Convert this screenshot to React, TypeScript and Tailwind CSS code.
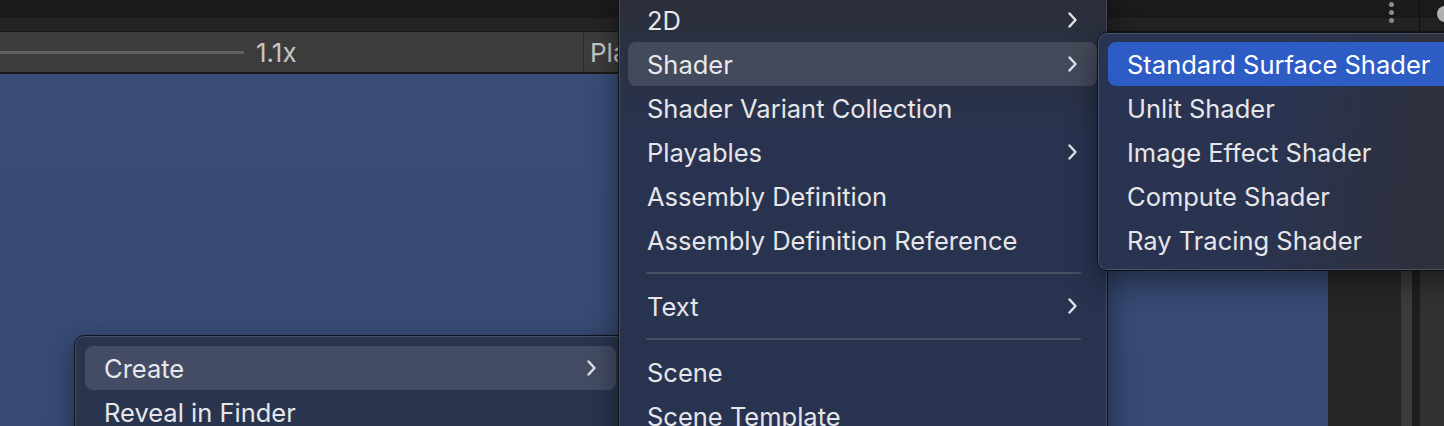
import React from 'react';

type Row = { label: string; sub?: boolean; hover?: boolean; selected?: boolean } | 'sep';

const MAIN_ROWS: Row[] = [
  { label: '2D', sub: true },
  { label: 'Shader', sub: true, hover: true },
  { label: 'Shader Variant Collection' },
  { label: 'Playables', sub: true },
  { label: 'Assembly Definition' },
  { label: 'Assembly Definition Reference' },
  'sep',
  { label: 'Text', sub: true },
  'sep',
  { label: 'Scene' },
  { label: 'Scene Template' },
];

const SHADER_ROWS: Row[] = [
  { label: 'Standard Surface Shader', selected: true },
  { label: 'Unlit Shader' },
  { label: 'Image Effect Shader' },
  { label: 'Compute Shader' },
  { label: 'Ray Tracing Shader' },
];

const ASSET_ROWS: Row[] = [
  { label: 'Create', sub: true, hover: true },
  { label: 'Reveal in Finder' },
  { label: 'Open' },
];

function Chevron() {
  return (
    <svg width="11" height="18" viewBox="0 0 11 18" fill="none" className="shrink-0">
      <path d="M2.5 2.5l6 6.5-6 6.5" stroke="#e3e4e7" strokeWidth="2.4" strokeLinecap="round" strokeLinejoin="round" />
    </svg>
  );
}

function MenuRows({ rows }: { rows: Row[] }) {
  return (
    <>
      {rows.map((r, i) =>
        r === 'sep' ? (
          <div key={i} className="h-[22px] flex items-center pl-[18px] pr-[16px]">
            <div className="h-[2px] w-full bg-[#474f63]" />
          </div>
        ) : (
          <div
            key={i}
            className={`h-[44px] flex items-center justify-between pl-[19px] pr-[19px] rounded-[8px] ${
              r.selected ? 'bg-[#2d5cc4] text-white' : r.hover ? 'bg-white/[0.12] text-[#e8e8ea]' : 'text-[#e6e6e8]'
            }`}
          >
            <span className="whitespace-nowrap pt-[2px]">{r.label}</span>
            {r.sub && <Chevron />}
          </div>
        )
      )}
    </>
  );
}

export default function App() {
  return (
    <div className="relative w-[1444px] h-[426px] overflow-hidden flex flex-col bg-[#1b1b1b] font-[Inter,'Liberation_Sans',sans-serif] antialiased">
      {/* window strip */}
      <div className="h-[32px] shrink-0 flex items-center bg-[linear-gradient(to_bottom,#1b1b1b_18px,#242424_18px)] border-b border-[#161616]">
        <div className="flex-1" />
        <div className="flex flex-col gap-[3px] mr-[25px] mt-[-6px]">
          <span className="w-[5px] h-[5px] rounded-full bg-[#8c8c8c]" />
          <span className="w-[5px] h-[5px] rounded-full bg-[#8c8c8c]" />
          <span className="w-[5px] h-[5px] rounded-full bg-[#8c8c8c]" />
        </div>
        <div className="w-px self-stretch bg-[#0f0f0f]" />
        <div className="w-[17px]" />
        <div className="w-[16px] h-[16px] rounded-full bg-[#b4b4b4] mr-[-9px] mt-[-4px]" />
      </div>

      {/* scene toolbar */}
      <div className="h-[42px] shrink-0 flex items-center bg-[#3c3c3c] border-b-2 border-[#1a1a1a]">
        <div className="w-[244px] h-[3px] bg-[#5f5f5f]" />
        <span className="ml-[12px] text-[26px] text-[#c6c6c6]">1.1x</span>
        <div className="flex-1" />
        <div className="flex self-stretch items-center w-[36px] overflow-hidden">
          <div className="w-px self-stretch bg-[#282828] shrink-0" />
          <span className="ml-[6px] text-[26px] text-[#c6c6c6] whitespace-nowrap">Pla</span>
        </div>
        <div className="w-[825px]" />
      </div>

      {/* scene + side panel */}
      <div className="flex-1 flex">
        <div className="flex-1 bg-[linear-gradient(to_bottom,#394d77,#374a73)]" />
        <div className="w-[116px] flex">
          <div className="w-[73px] bg-[#262626]" />
          <div className="w-[11px] bg-[#3c3c3c]" />
          <div className="w-[8px] bg-[#1e1e1e]" />
          <div className="flex-1 bg-[#323232]" />
        </div>
      </div>

      {/* asset context menu */}
      <div className="absolute left-[74px] top-[335px] w-[553px] h-[200px] rounded-[10px] border border-[#0e1118] bg-[#29344f] shadow-[inset_0_0_0_1px_rgba(255,255,255,0.14),0_8px_24px_rgba(0,0,0,0.4)] pl-[10px] pr-[10px] pt-[10px] text-[25.5px]">
        <MenuRows rows={ASSET_ROWS} />
      </div>

      {/* create submenu */}
      <div className="absolute left-[618px] top-[-12px] w-[490px] h-[460px] rounded-[10px] border border-[#0d1016] bg-[linear-gradient(to_bottom,#2b2e38_0px,#2b3142_60px,#293350_150px,#283350_100%)] shadow-[inset_0_0_0_1px_rgba(255,255,255,0.14),0_10px_30px_rgba(0,0,0,0.45)] pl-[9px] pr-[10px] pt-[9px] text-[25.5px]">
        <MenuRows rows={MAIN_ROWS} />
      </div>

      {/* shader submenu */}
      <div className="absolute left-[1097px] top-[32px] w-[400px] h-[239px] rounded-[10px] border border-[#0d1016] bg-[linear-gradient(100deg,#293452_0%,#2a3350_45%,#2d3140_75%,#2f3034_100%)] shadow-[inset_0_0_0_1px_rgba(255,255,255,0.16),0_10px_30px_rgba(0,0,0,0.45)] pl-[10px] pt-[9px] text-[25.5px]">
        <MenuRows rows={SHADER_ROWS} />
      </div>
    </div>
  );
}
